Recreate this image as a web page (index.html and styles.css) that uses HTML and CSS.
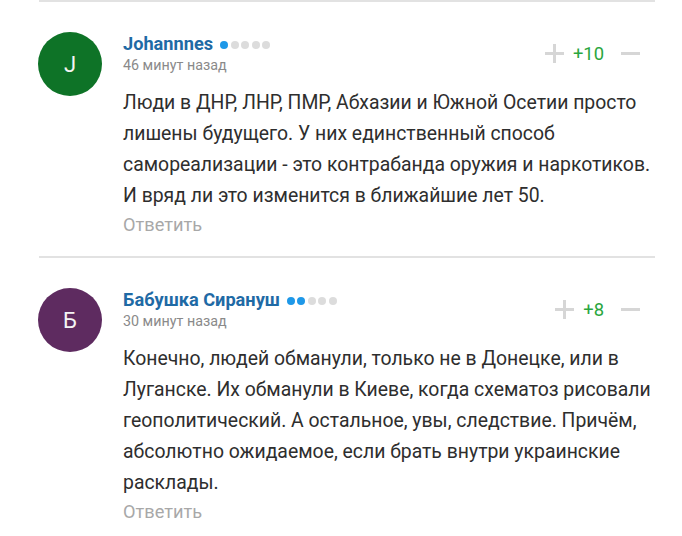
FILE: index.html
```html
<!DOCTYPE html>
<html lang="ru">
<head>
  <meta charset="UTF-8">
  <meta name="viewport" content="width=device-width, initial-scale=1.0">
  <title>Комментарии</title>
  <link rel="stylesheet" href="styles.css">
</head>
<body>
  <div class="comments">
    <div class="comment">
      <div class="avatar green">J</div>
      <div class="body">
        <div class="head">
          <div class="who">
            <div class="name">Johannnes
              <span class="rank"><i class="on"></i><i></i><i></i><i></i><i></i></span>
            </div>
            <div class="time">46 минут назад</div>
          </div>
          <div class="votes">
            <span class="plus"></span>
            <span class="score">+10</span>
            <span class="minus"></span>
          </div>
        </div>
        <p class="text">Люди в ДНР, ЛНР, ПМР, Абхазии и Южной Осетии просто лишены будущего. У них единственный способ самореализации - это контрабанда оружия и наркотиков. И вряд ли это изменится в ближайшие лет 50.</p>
        <a class="reply">Ответить</a>
      </div>
    </div>

    <div class="comment">
      <div class="avatar purple">Б</div>
      <div class="body">
        <div class="head">
          <div class="who">
            <div class="name">Бабушка Сирануш
              <span class="rank"><i class="on"></i><i class="on"></i><i></i><i></i><i></i></span>
            </div>
            <div class="time">30 минут назад</div>
          </div>
          <div class="votes">
            <span class="plus"></span>
            <span class="score">+8</span>
            <span class="minus"></span>
          </div>
        </div>
        <p class="text">Конечно, людей обманули, только не в Донецке, или в Луганске. Их обманули в Киеве, когда схематоз рисовали геополитический. А остальное, увы, следствие. Причём, абсолютно ожидаемое, если брать внутри украинские расклады.</p>
        <a class="reply">Ответить</a>
      </div>
    </div>
  </div>
</body>
</html>
```

FILE: styles.css
```css
* {
  box-sizing: border-box;
}
body {
  margin: 0;
  font-family: Roboto, 'Noto Sans', sans-serif;
  background: #fff;
  color: #333;
}
.comments {
  margin-left: 39px;
  width: 616px;
}
.comment {
  display: flex;
  gap: 21px;
  border-top: 2px solid #e2e2e2;
  padding: 30px 0 19px 0;
}
.avatar {
  flex: none;
  width: 64px;
  height: 64px;
  margin-left: -1px;
  border-radius: 50%;
  color: #f4f4f4;
  font-size: 22px;
  display: flex;
  align-items: center;
  justify-content: center;
}
.avatar.green {
  background: #0e7327;
}
.avatar.purple {
  background: #5e2b60;
}
.body {
  flex: 1;
}
.head {
  display: flex;
  justify-content: space-between;
  align-items: flex-start;
}
.name {
  font-size: 18.2px;
  font-weight: 700;
  color: #1f6aa5;
  line-height: 24px;
  display: flex;
  align-items: center;
  gap: 7px;
}
.rank {
  display: flex;
  gap: 2.5px;
  margin-top: 1px;
}
.rank i {
  width: 8px;
  height: 8px;
  border-radius: 50%;
  background: #dcdcdc;
}
.rank i.on {
  background: #1e98e8;
}
.time {
  font-size: 14.3px;
  color: #8a8a8a;
  line-height: 18px;
}
.votes {
  display: flex;
  align-items: center;
  gap: 9px;
  margin-top: 10px;
  margin-right: 15px;
  height: 22px;
}
.score {
  font-size: 18.4px;
  color: #2aa63e;
}
.plus, .minus {
  position: relative;
  width: 19px;
  height: 19px;
}
.plus::before, .minus::before, .plus::after {
  content: "";
  position: absolute;
  background: #d6d6d6;
  left: 0;
  top: 8px;
  width: 19px;
  height: 3px;
}
.plus::after {
  left: 8px;
  top: 0;
  width: 3px;
  height: 19px;
}
.minus {
  margin-left: 8px;
}
.text {
  margin: 13px 0 0 0;
  font-size: 19.4px;
  line-height: 31px;
  color: #2e2e2e;
}
.reply {
  display: block;
  margin-top: 2px;
  font-size: 18.2px;
  color: #a8a8a8;
  line-height: 24px;
}
```
